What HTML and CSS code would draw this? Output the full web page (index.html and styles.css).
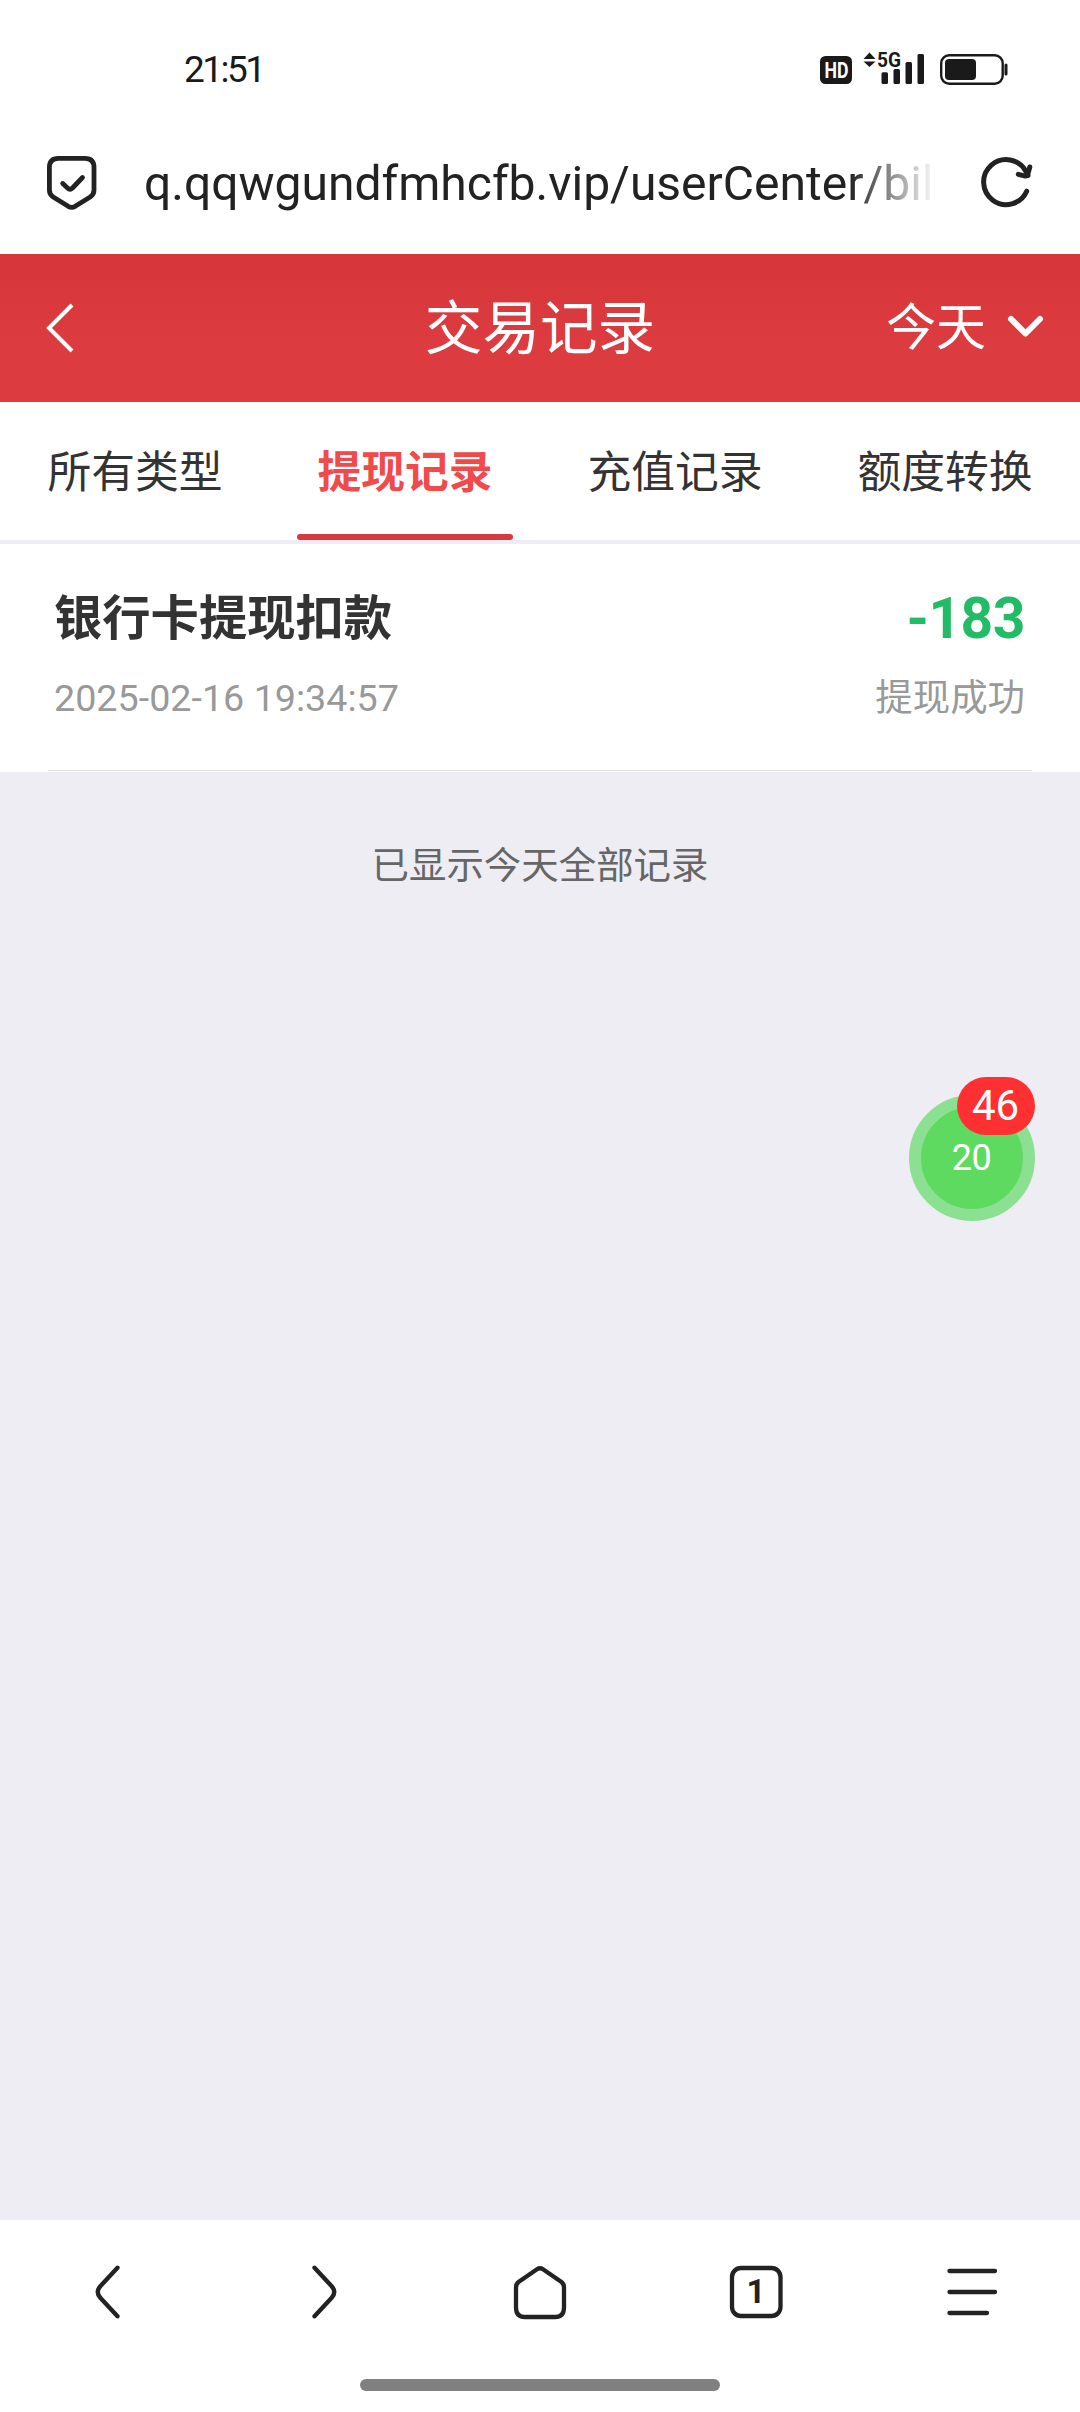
FILE: index.html
```html
<!DOCTYPE html>
<html lang="zh-CN">
<head>
<meta charset="utf-8">
<title>交易记录</title>
<link rel="stylesheet" href="styles.css">
</head>
<body>
<div class="screen">
  <div class="status-bar">
    <span class="clock">21:51</span>
    <svg class="status-icons" width="192" height="44" viewBox="0 -4 192 44">
      <rect x="3" y="6" width="32" height="28" rx="5.5" fill="#1a1a1a"/>
      <text class="hd-label" x="7.500" y="28" textLength="24" lengthAdjust="spacingAndGlyphs">HD</text>
      <path d="M52.500 2.500l6 6.500h-12zM52.500 17l6-5.500h-12z" fill="#1a1a1a"/>
      <text class="net-label" x="60" y="17.300" textLength="24" lengthAdjust="spacingAndGlyphs">5G</text>
      <g fill="#1a1a1a">
        <rect x="64.500" y="22.300" width="6.500" height="11.700" rx="1.500"/>
        <rect x="76.500" y="19" width="6.500" height="15" rx="1.500"/>
        <rect x="88.500" y="12" width="6.500" height="22" rx="1.500"/>
        <rect x="100.500" y="4" width="6.500" height="30" rx="1.500"/>
        <rect x="128" y="9" width="31" height="21" rx="4"/>
        <rect x="187.500" y="13.500" width="3" height="12" rx="1.500"/>
      </g>
      <rect x="124.200" y="5.200" width="61.500" height="28.600" rx="8" fill="none" stroke="#1a1a1a" stroke-width="2.400"/>
    </svg>
  </div>
  <div class="address-bar">
    <svg class="shield" width="56" height="60" viewBox="0 0 56 60" fill="none" stroke="#222" stroke-width="4.800" stroke-linejoin="round" stroke-linecap="round">
      <path d="M14.500 6.400H41Q50 6.400 50 15.500V38Q50 42.500 46.200 45L31.200 54.300Q27.700 56.300 24.200 54.300L9.200 45Q5.400 42.500 5.400 38V15.500Q5.400 6.400 14.500 6.400Z"/>
      <path d="M18.700 31.500L23.500 36Q26 38.300 28.500 36L38.500 25.500"/>
    </svg>
    <span class="url">q.qqwgundfmhcfb.vip/userCenter/bil</span>
    <svg class="reload" width="60" height="60" viewBox="0 0 60 60" fill="none" stroke="#222" stroke-width="5" stroke-linejoin="round" stroke-linecap="round">
      <path d="M50.700 39.200A22.500 22.500 0 1 1 49.900 19.300L52 23.500"/>
      <path d="M42.300 22.300L48.500 23.900Q51 24.500 51.800 22L53.800 15"/>
    </svg>
  </div>
  <header class="page-header">
    <svg class="back" width="40" height="60" viewBox="0 0 40 60" fill="none" stroke="#fff" stroke-width="4"><path d="M32 7L9 30L32 53"/></svg>
    <h1 class="title">交易记录</h1>
    <div class="period">
      <span>今天</span>
      <svg width="40" height="28" viewBox="0 0 40 28" fill="none" stroke="#fff" stroke-width="6" stroke-linecap="round" stroke-linejoin="round"><path d="M5 5L19.500 19.500L34 5"/></svg>
    </div>
  </header>
  <nav class="tabs">
    <span class="tab">所有类型</span>
    <span class="tab active">提现记录</span>
    <span class="tab">充值记录</span>
    <span class="tab">额度转换</span>
  </nav>
  <section class="record">
    <div class="record-body">
      <div class="row">
        <span class="name">银行卡提现扣款</span>
        <span class="amount">-183</span>
      </div>
      <div class="row">
        <span class="date">2025-02-16 19:34:57</span>
        <span class="state">提现成功</span>
      </div>
    </div>
  </section>
  <main class="rest">
    <p class="end-note">已显示今天全部记录</p>
    <div class="bubble"><span class="count">20</span><span class="badge">46</span></div>
  </main>
  <footer class="browser-nav">
    <div class="nav-items">
      <svg viewBox="0 0 60 60"><path d="M39.500 5.700L22.500 24Q17 30 22.500 36L39.500 54.300"/></svg>
      <svg viewBox="0 0 60 60"><path d="M20.500 5.700L37.500 24Q43 30 37.500 36L20.500 54.300"/></svg>
      <svg viewBox="0 0 60 60"><path d="M27 7.200L8.500 20Q6 22 6 25.500V45.500Q6 55 15 55H45Q54 55 54 45.500V25.500Q54 22 51.500 20L33 7.200Q30 5.200 27 7.200Z"/></svg>
      <svg viewBox="0 0 60 60"><rect x="6" y="6" width="48.500" height="48" rx="9"/><text class="tab-count" x="30" y="41">1</text></svg>
      <svg viewBox="0 0 60 60"><path d="M7.500 9H53M7.500 30H53M7.500 51H45"/></svg>
    </div>
    <div class="gesture-bar"></div>
  </footer>
</div>
</body>
</html>
```
FILE: styles.css
```css
* { box-sizing: border-box; }
body { margin: 0; }
.screen {
  display: flex;
  flex-direction: column;
  width: 1080px;
  height: 2412px;
  overflow: hidden;
  background: #fff;
  font-family: Roboto, "Noto Sans CJK SC", sans-serif;
}
.status-bar {
  display: flex;
  justify-content: space-between;
  height: 110px;
  padding: 46px 71px 0 184px;
}
.clock { padding-top: 5px; font-size: 37px; line-height: 38px; letter-spacing: -2.5px; color: #1a1a1a; }
.status-icons { flex: none; }
.hd-label, .net-label { font-weight: 700; font-size: 22px; }
.hd-label { fill: #fff; }
.net-label { fill: #1a1a1a; font-size: 21px; }
.address-bar {
  display: flex;
  align-items: center;
  height: 144px;
  padding: 0 44px;
}
.shield { flex: none; }
.url {
  width: 796px;
  margin: 4px 36px 0 44px;
  white-space: nowrap;
  font-size: 48px;
  line-height: 60px;
  color: #222;
  -webkit-mask-image: linear-gradient(to right, #000 705px, transparent 792px);
  mask-image: linear-gradient(to right, #000 705px, transparent 792px);
}
.reload { flex: none; }
.page-header {
  display: grid;
  grid-template-columns: 1fr auto 1fr;
  align-items: center;
  height: 148px;
  padding: 0 34px 0 34px;
  background: linear-gradient(#d6353a, #dc3b3f 60%);
  color: #fff;
}
.back { margin-left: 6px; }
.title { margin: 0; padding-top: 4px; font-size: 57.6px; line-height: 80px; font-weight: 400; }
.period {
  display: flex;
  align-items: center;
  justify-content: flex-end;
  gap: 20px;
  font-size: 50px;
  line-height: 70px;
}
.tabs {
  display: grid;
  grid-template-columns: repeat(4, 1fr);
  height: 142px;
  border-bottom: 4px solid #eeedf3;
}
.tab {
  display: flex;
  flex-direction: column;
  align-items: center;
  padding-top: 4px;
  font-size: 43.800px;
  line-height: 134px;
  color: #333;
}
.tab.active { font-weight: 600; color: #f04a4a; }
.tab.active::after {
  content: "";
  width: 216px;
  height: 6px;
  margin-top: -6px;
  border-radius: 3px;
  background: #d6393f;
}
.record { height: 228px; padding: 0 48px 1px; }
.record-body {
  height: 227px;
  padding: 40px 7px 0 6px;
  border-bottom: 1px solid #e6e6ea;
}
.row { display: flex; justify-content: space-between; align-items: center; }
.row + .row { margin-top: 11px; }
.name { font-size: 48.300px; line-height: 70px; font-weight: 700; color: #333; }
.amount { font-size: 57px; line-height: 70px; letter-spacing: -0.500px; font-weight: 700; color: #22bb66; }
.date, .state { font-size: 37.44px; line-height: 66px; color: #999; }
.date { font-size: 37.700px; }
.rest { position: relative; flex: 1; background: #eeedf3; }
.end-note {
  margin: 0;
  padding-top: 67px;
  text-align: center;
  font-size: 37.44px;
  line-height: 54px;
  color: #666;
}
.bubble {
  position: absolute;
  top: 323px;
  right: 45.500px;
  display: flex;
  align-items: center;
  justify-content: center;
  width: 126px;
  height: 126px;
  border: 12px solid #8ce092;
  border-radius: 50%;
  background: #5fda61;
  color: #fff;
}
.count { font-size: 36px; line-height: 40px; letter-spacing: -0.500px; }
.badge {
  position: absolute;
  top: -30px;
  right: -12px;
  width: 78px;
  height: 58px;
  border-radius: 29px;
  background: #ff3032;
  text-align: center;
  font-size: 42px;
  line-height: 58px;
}
.browser-nav { height: 192px; background: #fff; }
.nav-items {
  display: grid;
  grid-template-columns: repeat(5, 1fr);
  justify-items: center;
  height: 159px;
  padding-top: 42px;
}
.nav-items svg {
  width: 60px;
  height: 60px;
  fill: none;
  stroke: #222;
  stroke-width: 4.300px;
  stroke-linecap: round;
  stroke-linejoin: round;
}
.nav-items .tab-count { stroke: none; fill: #222; font-size: 33px; font-weight: 700; text-anchor: middle; }
.gesture-bar { width: 360px; height: 12px; margin: 0 auto; border-radius: 6px; background: #808080; }
```
